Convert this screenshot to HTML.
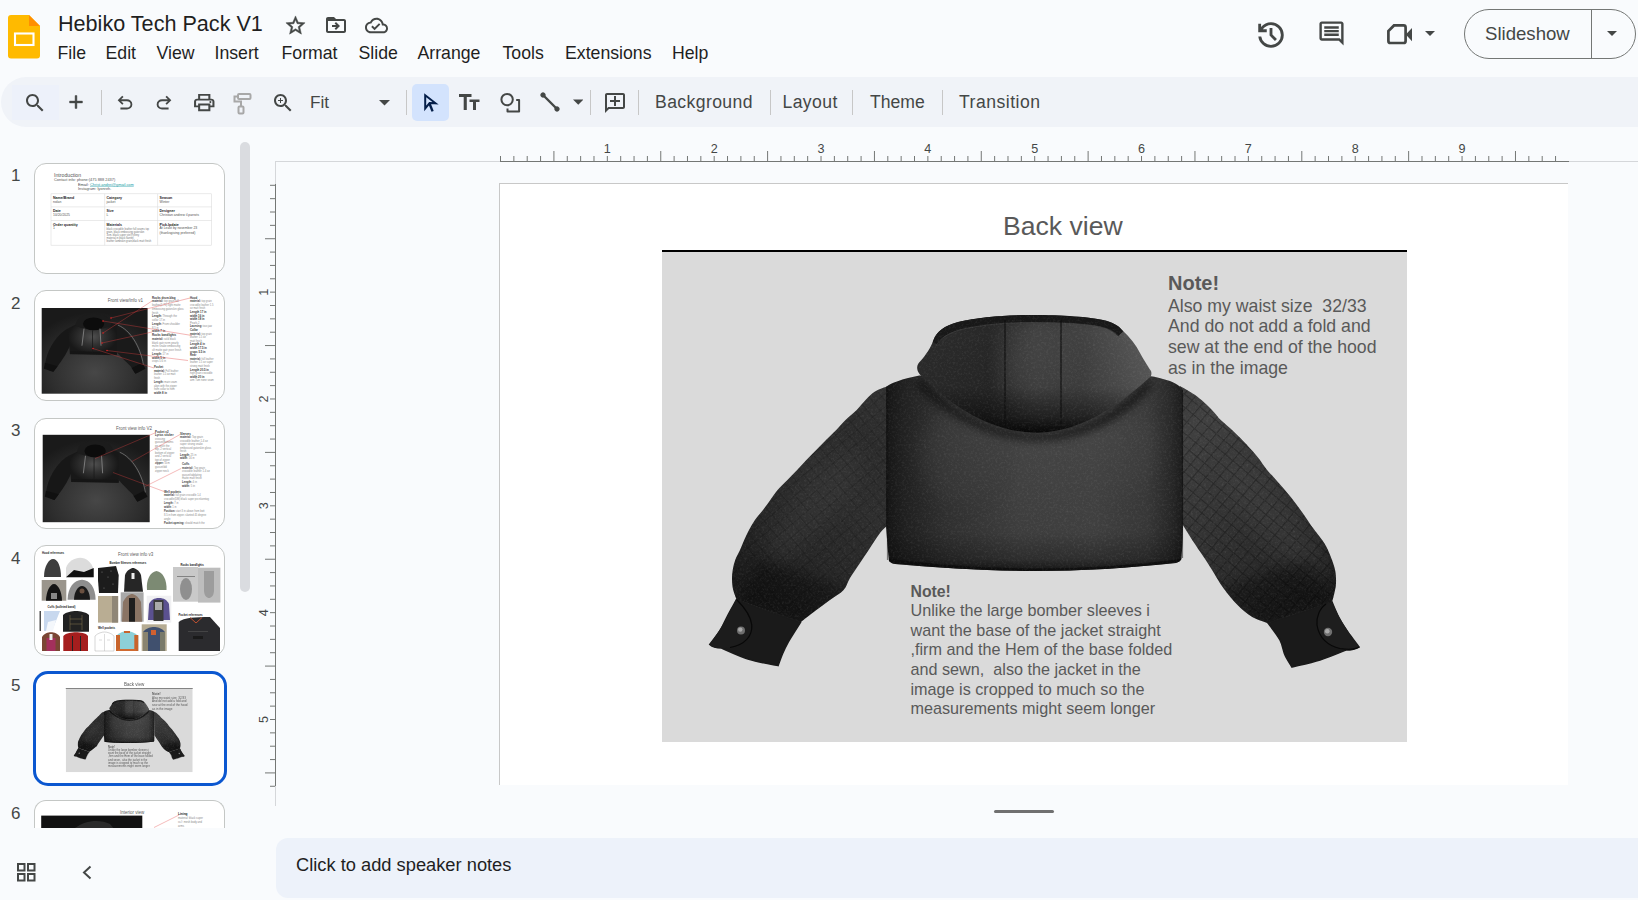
<!DOCTYPE html>
<html><head><meta charset="utf-8">
<style>
*{box-sizing:border-box;margin:0;padding:0}
html,body{width:1638px;height:900px;overflow:hidden;background:#f9fbfd;font-family:"Liberation Sans",sans-serif;color:#1f1f1f}
.a{position:absolute}
.ic{position:absolute;fill:#444746}
.menu span{position:absolute;top:43px;font-size:17.7px;color:#1f1f1f;white-space:nowrap;line-height:20px}
.tb{position:absolute;font-size:17.6px;color:#444746;white-space:nowrap;line-height:20px;top:92px}
.sep{position:absolute;width:1px;background:#c7c7c7;top:90px;height:25px}
.num{position:absolute;left:11px;font-size:17px;color:#444746;line-height:20px}
.th{position:absolute;left:34px;width:191px;height:111px;border:1px solid #c4c7c5;border-radius:12px;background:#fff;overflow:hidden}
</style></head>
<body>
<!-- HEADER -->
<svg class="a" style="left:8px;top:15px" width="32" height="44" viewBox="0 0 32 44">
 <path d="M3 0H21L32 11V40.5a3 3 0 0 1-3 3H3a3 3 0 0 1-3-3V3a3 3 0 0 1 3-3z" fill="#ffba00"/>
 <path d="M21 0L32 11H21z" fill="#ff8f00"/>
 <rect x="7" y="18.5" width="18.5" height="11.5" fill="none" stroke="#fff" stroke-width="2.1"/>
</svg>
<div class="a" style="left:58px;top:11px;font-size:21.6px;line-height:26px;color:#1f1f1f;white-space:nowrap">Hebiko Tech Pack V1</div>
<svg class="ic" style="left:284px;top:14px" width="23" height="23" viewBox="0 0 24 24"><path stroke="#444746" stroke-width="0.5" d="M22 9.24l-7.19-.62L12 2 9.19 8.63 2 9.24l5.46 4.73L5.82 21 12 17.27 18.18 21l-1.63-7.03L22 9.24zM12 15.4l-3.76 2.27 1-4.28-3.32-2.88 4.38-.38L12 6.1l1.71 4.04 4.38.38-3.32 2.88 1 4.28L12 15.4z"/></svg>
<svg class="ic" style="left:323.5px;top:12.8px" width="24" height="24" viewBox="0 0 24 24"><path d="M3 5h7.5l1.5 2v1H3z"/><path d="M20 6h-8l-2-2H4c-1.1 0-1.99.9-1.99 2L2 18c0 1.1.9 2 2 2h16c1.1 0 2-.9 2-2V8c0-1.1-.9-2-2-2zm0 12H4V6h5.17l2 2H20v10zm-7.84-6H8v2h4.16l-1.59 1.59L11.99 17 16 13.01 11.99 9l-1.41 1.41L12.16 12z"/></svg>
<svg class="ic" style="left:364.5px;top:14px" width="23" height="23" viewBox="0 0 24 24"><path d="M19.35 10.04C18.67 6.59 15.64 4 12 4 9.11 4 6.6 5.64 5.35 8.04 2.34 8.36 0 10.910 0 14c0 3.31 2.69 6 6 6h13c2.76 0 5-2.24 5-5 0-2.64-2.05-4.780-4.65-4.96zM19 18H6c-2.21 0-4-1.79-4-4 0-2.05 1.53-3.76 3.56-3.97l1.07-.11.5-.95C8.08 7.14 9.94 6 12 6c2.62 0 4.88 1.86 5.39 4.43l.3 1.5 1.53.11c1.56.1 2.78 1.41 2.78 2.960 0 1.65-1.35 3-3 3zm-9-3.82l-2.09-2.09L6.5 13.5 10 17l6.01-6.01-1.41-1.41z"/></svg>
<div class="menu">
 <span style="left:57.5px">File</span><span style="left:105.5px">Edit</span><span style="left:156.5px">View</span><span style="left:214.5px">Insert</span><span style="left:281.5px">Format</span><span style="left:358.5px">Slide</span><span style="left:417.5px">Arrange</span><span style="left:502.5px">Tools</span><span style="left:565px">Extensions</span><span style="left:672px">Help</span>
</div>
<!-- right header -->
<svg class="ic" style="left:1253.5px;top:17.5px" width="34" height="34" viewBox="0 -960 960 960"><path d="M480-120q-138 0-240.5-91.5T122-440h82q14 104 92.5 172T480-200q117 0 198.5-81.5T760-480q0-117-81.5-198.5T480-760q-69 0-129 32t-101 88h110v80H120v-240h80v94q51-64 124.5-99T480-840q75 0 140.5 28.5t114 77q48.5 48.5 77 114T840-480q0 75-28.5 140.5t-77 114q-48.5 48.5-114 77T480-120Zm112-192L440-464v-216h80v184l128 128-56 56Z"/></svg>
<svg class="ic" style="left:1316.5px;top:18.5px" width="29" height="29" viewBox="0 0 24 24"><path d="M21.99 4c0-1.1-.89-2-1.99-2H4c-1.1 0-2 .9-2 2v12c0 1.1.9 2 2 2h14l4 4-.01-18zM20 4v13.17L18.83 16H4V4h16zM6 12h12v2H6zm0-3h12v2H6zm0-3h12v2H6z"/></svg>
<svg class="a" style="left:1380px;top:15px" width="40" height="40" viewBox="1380 15 40 40"><path d="M1394 25.45H1403.6A2 2 0 0 1 1405.6 27.45V41A2 2 0 0 1 1403.6 43H1390.4A2 2 0 0 1 1388.4 41V31.1Z" fill="none" stroke="#444746" stroke-width="2.7" stroke-linejoin="miter"/><path d="M1405.8 34.6L1412 28V41.2Z" fill="#444746"/></svg>
<svg class="ic" style="left:1425px;top:30.5px" width="10" height="5" viewBox="0 0 10 5"><path d="M0 0h10L5 5z"/></svg>
<div class="a" style="left:1464px;top:9px;width:172px;height:50px;border:1px solid #747775;border-radius:25px"></div>
<div class="a" style="left:1591px;top:9px;width:1px;height:50px;background:#747775"></div>
<div class="a" style="left:1485px;top:23px;font-size:18.6px;line-height:22px;color:#444746">Slideshow</div>
<svg class="ic" style="left:1606.5px;top:30.5px" width="10" height="5" viewBox="0 0 10 5"><path d="M0 0h10L5 5z"/></svg>

<!-- TOOLBAR -->
<div class="a" style="left:1px;top:77px;width:1700px;height:50px;border-radius:25px;background:#f0f3f8"></div>
<div class="a" style="left:12px;top:85px;width:47px;height:35px;background:#edf1fa"></div>
<svg class="ic" style="left:23px;top:90.5px" width="24" height="24" viewBox="0 0 24 24"><path d="M15.5 14h-.79l-.28-.27C15.41 12.59 16 11.11 16 9.5 16 5.91 13.09 3 9.5 3S3 5.910 3 9.5 5.91 16 9.5 16c1.61 0 3.09-.59 4.23-1.57l.27.28v.79l5 4.99L20.49 19l-4.99-5zm-6 0C7.01 14 5 11.99 5 9.5S7.01 5 9.5 5 14 7.01 14 9.5 11.99 14 9.5 14z"/></svg>
<svg class="ic" style="left:64.5px;top:90.5px" width="22" height="22" viewBox="0 0 24 24"><path d="M19 13h-6v6h-2v-6H5v-2h6V5h2v6h6v2z" stroke="#444746" stroke-width="0.5"/></svg>
<div class="sep" style="left:101px"></div>
<svg class="ic" style="left:114px;top:92.3px" width="22" height="22" viewBox="0 -960 960 960"><path d="M280-200v-80h284q63 0 109.5-40T720-420q0-60-46.5-100T564-560H312l104 104-56 56-200-200 200-200 56 56-104 104h252q97 0 166.5 63T800-420q0 94-69.5 157T564-200H280Z"/></svg>
<svg class="ic" style="left:152.5px;top:92.3px" width="22" height="22" viewBox="0 -960 960 960"><path d="M396-200q-97 0-166.5-63T160-420q0-94 69.5-157T396-640h252L544-744l56-56 200 200-200 200-56-56 104-104H396q-63 0-109.5 40T240-420q0 60 46.5 100T396-280h284v80H396Z"/></svg>
<svg class="ic" style="left:192px;top:90.5px" width="24.5" height="23" viewBox="0 -960 960 960" preserveAspectRatio="none"><path d="M640-640v-120H320v120h-80v-200h480v200h-80Zm-480 80h640-640Zm560 100q17 0 28.5-11.5T760-500q0-17-11.5-28.5T720-540q-17 0-28.5 11.5T680-500q0 17 11.5 28.5T720-460Zm-80 260v-160H320v160h320Zm80 80H240v-160H80v-240q0-51 35-85.5t85-34.5h560q51 0 85.5 34.5T880-520v240H720v160Zm80-240v-160q0-17-11.5-28.5T760-560H200q-17 0-28.5 11.5T160-520v160h80v-80h480v80h80Z"/></svg>
<svg class="a" style="left:232px;top:92px" width="20" height="23" viewBox="0 0 20 23"><g fill="none" stroke="#a8a8a8" stroke-width="2"><rect x="6" y="2" width="12.5" height="5" rx="1"/><path d="M6 4.5H2.5v5h6.5v4.5"/><rect x="6.5" y="14.5" width="5" height="7" rx="1"/></g></svg>
<svg class="ic" style="left:271px;top:90.5px" width="24" height="24" viewBox="0 0 24 24"><path d="M15.5 14h-.79l-.28-.27C15.41 12.59 16 11.11 16 9.5 16 5.91 13.09 3 9.5 3S3 5.91 3 9.5 5.91 16 9.5 16c1.61 0 3.09-.59 4.23-1.57l.27.28v.79l5 4.99L20.49 19l-4.99-5zm-6 0C7.01 14 5 11.99 5 9.5S7.01 5 9.5 5 14 7.01 14 9.5 11.99 14 9.5 14zm2.5-4h-2v2H9v-2H7V9h2V7h1v2h2v1z"/></svg>
<div class="tb" style="left:310px;font-size:17.2px">Fit</div>
<svg class="ic" style="left:379px;top:100px" width="11" height="5.5" viewBox="0 0 10 5"><path d="M0 0h10L5 5z"/></svg>
<div class="sep" style="left:406px"></div>
<div class="a" style="left:412px;top:84px;width:37px;height:37px;border-radius:5px;background:#d3e3fd"></div>
<svg class="a" style="left:415px;top:85px" width="30" height="32" viewBox="415 85 30 32"><path d="M425.2 95.2L435.6 103.3L429.6 103.1L425.2 108.4Z" fill="none" stroke="#041e49" stroke-width="2" stroke-linejoin="miter"/><path d="M429.4 103.2L432.6 111.4" stroke="#041e49" stroke-width="2.4"/></svg>
<svg class="ic" style="left:459px;top:93.5px" width="21" height="16" viewBox="0 0 21 16"><path d="M0 0h12.5v3H7.8v13H4.7V3H0zM10.5 5.5h10v2.6h-3.5V16h-3V8.1h-3.5z"/></svg>
<svg class="a" style="left:495px;top:88px" width="30" height="30" viewBox="495 88 30 30"><g fill="none" stroke="#444746" stroke-width="2"><circle cx="507.1" cy="99.6" r="5.7"/><path d="M516.2 100.1H519.1V111.6H507.5V108.6" stroke-linejoin="round"/></g></svg>
<svg class="a" style="left:540px;top:92px" width="20" height="20" viewBox="0 0 20 20"><g stroke="#444746" fill="#444746"><path d="M3 3L17 17" stroke-width="2.4"/><circle cx="3" cy="3" r="2.2"/><circle cx="17" cy="17" r="2.2"/></g></svg>
<svg class="ic" style="left:572.5px;top:99px" width="10.5" height="6" viewBox="0 0 10 5"><path d="M0 0h10L5 5z"/></svg>
<div class="sep" style="left:590px"></div>
<svg class="ic" style="left:602.5px;top:90.5px" width="24" height="24" viewBox="0 0 24 24"><path d="M22 4c0-1.1-.9-2-2-2H4c-1.1 0-1.99.9-1.99 2L2 22l4-4h14c1.1 0 2-.9 2-2V4zm-2 12H5.17L4 17.17V4h16v12zM13 5h-2v4H7v2h4v4h2v-4h4V9h-4z"/></svg>
<div class="sep" style="left:638px"></div>
<div class="tb" style="left:655px;letter-spacing:0.4px">Background</div>
<div class="sep" style="left:770px"></div>
<div class="tb" style="left:782.5px;letter-spacing:0.4px">Layout</div>
<div class="sep" style="left:852px"></div>
<div class="tb" style="left:870px">Theme</div>
<div class="sep" style="left:942px"></div>
<div class="tb" style="left:959px;letter-spacing:0.5px">Transition</div>

<!-- SIDEBAR -->
<div class="num" style="top:166.3px">1</div>
<div class="num" style="top:293.8px">2</div>
<div class="num" style="top:421.3px">3</div>
<div class="num" style="top:548.8px">4</div>
<div class="num" style="top:676.3px">5</div>
<div class="num" style="top:803.8px">6</div>
<div class="th" style="top:162.5px;height:111px"><svg width="191" height="111" viewBox="34 162.5 191 111" style="position:absolute;left:-1px;top:-1px" font-family="Liberation Sans">
<text x="54.0" y="176.7" font-size="5.20" fill="#555">Introduction</text>
<text x="54.0" y="180.8" font-size="3.90" fill="#555">Contact info: phone:(475 888 2437)</text>
<text x="78.0" y="185.0" font-size="3.90" fill="#444">Email: </text>
<text x="90.0" y="185.0" font-size="3.90" fill="#1b9ba6" text-decoration="underline">Christ.andrei@gmail.com</text>
<text x="78.0" y="189.6" font-size="3.90" fill="#555">Instagram: lyonreh.</text>
<g stroke="#dcdcdc" stroke-width="0.6" fill="none"><rect x="51" y="193.3" width="160.6" height="51.4"/><path d="M51 206.4H211.6M51 220H211.6M104.7 193.3V244.7M157.6 193.3V244.7"/></g>
<text x="53.0" y="198.8" font-size="3.60" fill="#222" font-weight="bold">Name/Brand</text>
<text x="53.0" y="202.7" font-size="3.40" fill="#555">nolan</text>
<text x="106.5" y="198.8" font-size="3.60" fill="#222" font-weight="bold">Category</text>
<text x="106.5" y="202.7" font-size="3.40" fill="#555">jacket</text>
<text x="159.5" y="198.8" font-size="3.60" fill="#222" font-weight="bold">Season</text>
<text x="159.5" y="202.7" font-size="3.40" fill="#555">Winter</text>
<text x="53.0" y="211.9" font-size="3.60" fill="#222" font-weight="bold">Date</text>
<text x="53.0" y="215.8" font-size="3.40" fill="#555">10/20/2025</text>
<text x="106.5" y="211.9" font-size="3.60" fill="#222" font-weight="bold">Size</text>
<text x="106.5" y="215.8" font-size="3.40" fill="#555">L</text>
<text x="159.5" y="211.9" font-size="3.60" fill="#222" font-weight="bold">Designer</text>
<text x="159.5" y="215.8" font-size="3.40" fill="#555">Christian andrew il.parrots</text>
<text x="53.0" y="225.0" font-size="3.60" fill="#222" font-weight="bold">Order quantity</text>
<text x="53.0" y="228.9" font-size="3.40" fill="#555">1</text>
<text x="106.5" y="225.0" font-size="3.60" fill="#222" font-weight="bold">Materials</text>
<text x="159.5" y="225.0" font-size="3.60" fill="#222" font-weight="bold">Pick-Ipdate</text>
<text x="159.5" y="228.9" font-size="3.40" fill="#555">At Least by november 23</text>
<text x="106.5" y="229.0" font-size="2.60" fill="#777">black crocodile leather full seams top</text>
<text x="106.5" y="232.0" font-size="2.60" fill="#777">grain. black embossing gatorskin</text>
<text x="106.5" y="235.0" font-size="2.60" fill="#777">3cm. black super ste@shiny</text>
<text x="106.5" y="238.3" font-size="2.60" fill="#777">material in black flannel</text>
<text x="106.5" y="241.2" font-size="2.60" fill="#777">leather lambskin grain,black matt finish</text>
<text x="159.5" y="233.7" font-size="3.40" fill="#555">(thanksgiving preferred)</text>
</svg></div>
<div class="th" style="top:290.0px;height:111px"><svg width="191" height="111" viewBox="34 290.0 191 111" style="position:absolute;left:-1px;top:-1px" font-family="Liberation Sans">
<text x="107.8" y="302.0" font-size="4.50" fill="#5a5a5a">Front view/info v1</text>
<defs><radialGradient id="jg2" cx="0.5" cy="0.75" r="0.7"><stop offset="0" stop-color="#474747"/><stop offset="0.6" stop-color="#2e2e2e"/><stop offset="1" stop-color="#1a1a1a"/></radialGradient><radialGradient id="jg2j" cx="0.5" cy="0.45" r="0.5"><stop offset="0" stop-color="#505050"/><stop offset="0.5" stop-color="#303030"/><stop offset="1" stop-color="#181818"/></radialGradient></defs><rect x="41.7" y="308.0" width="105.9" height="85.7" fill="url(#jg2)"/><path d="M68.17 328.14 C57.59 333.71 49.11 346.56 45.94 359.42 C44.35 366.28 44.88 369.70 53.35 371.85 L57.59 366.28 C62.88 359.42 68.17 350.85 71.35 342.28 C71.35 336.28 70.29 331.14 68.17 328.14 Z" fill="#171717"/><path d="M44.88 362.85 L43.82 368.85 L53.35 371.85 L57.59 366.28 Z" fill="#101010"/><path d="M116.89 325.14 C126.42 329.43 137.01 342.28 142.31 359.42 C144.95 366.28 146.01 369.70 135.32 373.65 L130.66 366.28 C125.36 361.13 119.01 355.13 115.83 350.85 C114.77 336.28 114.77 330.28 116.89 325.14 Z" fill="#1a1a1a"/><path d="M142.31 362.85 L145.48 368.85 L135.32 373.65 L131.71 367.99 Z" fill="#101010"/><path d="M117.95 325.14 C130.66 330.28 140.19 346.56 143.36 364.56" fill="none" stroke="#9a9a9a" stroke-width="0.8" opacity="0.7"/><path d="M68.17 328.14 L79.82 322.57 L109.48 321.71 L116.89 325.14 L116.89 355.31 L69.87 354.28 Z" fill="url(#jg2j)"/><path d="M70.29 352.56 L116.89 353.42" stroke="#151515" stroke-width="2.4"/><path d="M75.59 325.14 C76.65 316.57 84.06 314.43 93.59 314.43 C103.12 314.43 110.53 316.57 111.59 324.28 C105.24 331.14 84.06 331.14 75.59 325.14 Z" fill="#1c1c1c"/><ellipse cx="93.59" cy="323.85" rx="10.59" ry="6.43" fill="#0c0c0c"/><path d="M84.06 328.57 L81.94 345.71 M99.94 328.57 L101.00 345.71" stroke="#aaa" stroke-width="0.6"/><path d="M92.53 330.28 L92.53 352.56" stroke="#1a1a1a" stroke-width="0.8"/>
<text x="152.0" y="298.5" font-size="2.90" fill="#3a3a3a" font-weight="bold">Rocks drum.blag</text><text x="152.0" y="302.2" font-size="2.70"><tspan font-weight="bold" fill="#3a3a3a">material:</tspan><tspan fill="#8a8a8a"> top grain full</tspan></text><text x="152.0" y="306.0" font-size="2.70" fill="#8a8a8a">leather(1.75) light matte</text><text x="152.0" y="309.8" font-size="2.70" fill="#8a8a8a">embossing gatorskin gloss</text><text x="152.0" y="313.5" font-size="2.70" fill="#8a8a8a">finish</text><text x="152.0" y="317.2" font-size="2.70"><tspan font-weight="bold" fill="#3a3a3a">Length:</tspan><tspan fill="#8a8a8a"> Through the</tspan></text><text x="152.0" y="321.0" font-size="2.70" fill="#8a8a8a">collar 17.in</text><text x="152.0" y="324.8" font-size="2.70"><tspan font-weight="bold" fill="#3a3a3a">Length:</tspan><tspan fill="#8a8a8a"> From shoulder</tspan></text><text x="152.0" y="328.5" font-size="2.70" fill="#8a8a8a">8.5 in</text><text x="152.0" y="332.2" font-size="2.90" fill="#3a3a3a" font-weight="bold">width 7 in</text><text x="152.0" y="336.0" font-size="2.90" fill="#3a3a3a" font-weight="bold">Rocks bandlights</text><text x="152.0" y="339.8" font-size="2.70"><tspan font-weight="bold" fill="#3a3a3a">material:</tspan><tspan fill="#8a8a8a"> sold black</tspan></text><text x="152.0" y="343.5" font-size="2.70" fill="#8a8a8a">blank gatr nvrm pearly</text><text x="152.0" y="347.2" font-size="2.70" fill="#8a8a8a">mchn snake embossing</text><text x="152.0" y="351.0" font-size="2.70" fill="#8a8a8a">ult matte gatr pvcn finish</text><text x="152.0" y="354.8" font-size="2.70"><tspan font-weight="bold" fill="#3a3a3a">Length:</tspan><tspan fill="#8a8a8a"> 17 in</tspan></text><text x="152.0" y="358.5" font-size="2.90" fill="#3a3a3a" font-weight="bold">width 5 in</text><text x="152.0" y="362.2" font-size="2.70" fill="#8a8a8a">crops 5.6 in</text>
<text x="190.0" y="298.5" font-size="2.80" fill="#3a3a3a" font-weight="bold">Hood</text><text x="190.0" y="302.1" font-size="2.60"><tspan font-weight="bold" fill="#3a3a3a">material:</tspan><tspan fill="#8a8a8a"> top grain</tspan></text><text x="190.0" y="305.7" font-size="2.60" fill="#8a8a8a">crocodile leather 1.5</text><text x="190.0" y="309.3" font-size="2.60" fill="#8a8a8a">oz matt finish</text><text x="190.0" y="312.9" font-size="2.80" fill="#3a3a3a" font-weight="bold">Length 17 in</text><text x="190.0" y="316.5" font-size="2.80" fill="#3a3a3a" font-weight="bold">width 16 in</text><text x="190.0" y="320.1" font-size="2.80" fill="#3a3a3a" font-weight="bold">width 18 in</text><text x="190.0" y="323.7" font-size="2.60" fill="#8a8a8a">Pearls 2</text><text x="190.0" y="327.3" font-size="2.60"><tspan font-weight="bold" fill="#3a3a3a">Lacesing:</tspan><tspan fill="#8a8a8a"> tour.jaw</tspan></text><text x="190.0" y="330.9" font-size="2.80" fill="#3a3a3a" font-weight="bold">Collar</text><text x="190.0" y="334.5" font-size="2.60"><tspan font-weight="bold" fill="#3a3a3a">material:</tspan><tspan fill="#8a8a8a"> top grain</tspan></text><text x="190.0" y="338.1" font-size="2.60" fill="#8a8a8a">leather 1.5 oz</text><text x="190.0" y="341.7" font-size="2.60" fill="#8a8a8a">matt finish</text><text x="190.0" y="345.3" font-size="2.80" fill="#3a3a3a" font-weight="bold">Length 4 in</text><text x="190.0" y="348.9" font-size="2.80" fill="#3a3a3a" font-weight="bold">width 17.5 in</text><text x="190.0" y="352.5" font-size="2.80" fill="#3a3a3a" font-weight="bold">crops 5.5 in</text><text x="190.0" y="356.1" font-size="2.80" fill="#3a3a3a" font-weight="bold">Rear</text><text x="190.0" y="359.7" font-size="2.60"><tspan font-weight="bold" fill="#3a3a3a">material:</tspan><tspan fill="#8a8a8a"> full leather</tspan></text><text x="190.0" y="363.3" font-size="2.60" fill="#8a8a8a">leather 1.5 oz super</text><text x="190.0" y="366.9" font-size="2.60" fill="#8a8a8a">strong matt finish</text><text x="190.0" y="370.5" font-size="2.80" fill="#3a3a3a" font-weight="bold">Length 20.5 in</text><text x="190.0" y="374.1" font-size="2.60" fill="#8a8a8a">high grain crocodile</text><text x="190.0" y="377.7" font-size="2.80" fill="#3a3a3a" font-weight="bold">width 20 in</text><text x="190.0" y="381.3" font-size="2.60" fill="#8a8a8a">arm Tum none seam</text>
<text x="154.0" y="368.0" font-size="2.80" fill="#3a3a3a" font-weight="bold">Pocket</text><text x="154.0" y="371.7" font-size="2.60"><tspan font-weight="bold" fill="#3a3a3a">material:</tspan><tspan fill="#8a8a8a"> Full leather</tspan></text><text x="154.0" y="375.4" font-size="2.60" fill="#8a8a8a">leather 1.5 oz matt</text><text x="154.0" y="379.1" font-size="2.60" fill="#8a8a8a">finish</text><text x="154.0" y="382.8" font-size="2.60"><tspan font-weight="bold" fill="#3a3a3a">Length:</tspan><tspan fill="#8a8a8a"> main seam</tspan></text><text x="154.0" y="386.5" font-size="2.60" fill="#8a8a8a">align with the zipper</text><text x="154.0" y="390.2" font-size="2.60" fill="#8a8a8a">from collar to hem</text><text x="154.0" y="393.9" font-size="2.80" fill="#3a3a3a" font-weight="bold">width 8 in</text>
<g stroke="#e04040" stroke-width="0.45" opacity="0.85" fill="none"><path d="M111 318L190 298M103 333L152 301M103 321L192 335.5M102 343L152 332M93 348.5L154 368M107 350.5L188 360.5"/></g><g fill="#e02020"><circle cx="111" cy="318" r="0.8"/><circle cx="103" cy="333" r="0.8"/><circle cx="103" cy="321" r="0.8"/><circle cx="102" cy="343" r="0.8"/><circle cx="93" cy="348.5" r="0.8"/><circle cx="107" cy="350.5" r="0.8"/></g>
</svg></div>
<div class="th" style="top:417.5px;height:111px"><svg width="191" height="111" viewBox="34 417.5 191 111" style="position:absolute;left:-1px;top:-1px" font-family="Liberation Sans">
<text x="116.0" y="429.3" font-size="4.50" fill="#5a5a5a">Front view info V2</text>
<defs><radialGradient id="jg3" cx="0.5" cy="0.75" r="0.7"><stop offset="0" stop-color="#474747"/><stop offset="0.6" stop-color="#2e2e2e"/><stop offset="1" stop-color="#1a1a1a"/></radialGradient><radialGradient id="jg3j" cx="0.5" cy="0.45" r="0.5"><stop offset="0" stop-color="#505050"/><stop offset="0.5" stop-color="#303030"/><stop offset="1" stop-color="#181818"/></radialGradient></defs><rect x="42.7" y="434.3" width="107.0" height="87.4" fill="url(#jg3)"/><path d="M69.45 454.84 C58.75 460.52 50.19 473.63 46.98 486.74 C45.38 493.73 45.91 497.23 54.47 499.41 L58.75 493.73 C64.10 486.74 69.45 478.00 72.66 469.26 C72.66 463.14 71.59 457.90 69.45 454.84 Z" fill="#171717"/><path d="M45.91 490.24 L44.84 496.35 L54.47 499.41 L58.75 493.73 Z" fill="#101010"/><path d="M118.67 451.78 C128.30 456.15 139.00 469.26 144.35 486.74 C147.02 493.73 148.09 497.23 137.29 501.25 L132.58 493.73 C127.23 488.49 120.81 482.37 117.60 478.00 C116.53 463.14 116.53 457.02 118.67 451.78 Z" fill="#1a1a1a"/><path d="M144.35 490.24 L147.56 496.35 L137.29 501.25 L133.65 495.48 Z" fill="#101010"/><path d="M119.74 451.78 C132.58 457.02 142.21 473.63 145.42 491.98" fill="none" stroke="#9a9a9a" stroke-width="0.8" opacity="0.7"/><path d="M69.45 454.84 L81.22 449.16 L111.18 448.28 L118.67 451.78 L118.67 482.54 L71.16 481.50 Z" fill="url(#jg3j)"/><path d="M71.59 479.75 L118.67 480.62" stroke="#151515" stroke-width="2.4"/><path d="M76.94 451.78 C78.01 443.04 85.50 440.86 95.13 440.86 C104.76 440.86 112.25 443.04 113.32 450.91 C106.90 457.90 85.50 457.90 76.94 451.78 Z" fill="#1c1c1c"/><ellipse cx="95.13" cy="450.47" rx="10.70" ry="6.56" fill="#0c0c0c"/><path d="M85.50 455.28 L83.36 472.76 M101.55 455.28 L102.62 472.76" stroke="#aaa" stroke-width="0.6"/><path d="M94.06 457.02 L94.06 479.75" stroke="#1a1a1a" stroke-width="0.8"/>
<text x="155.0" y="432.0" font-size="2.90" fill="#3a3a3a" font-weight="bold">Pocket v2</text><text x="155.0" y="435.6" font-size="2.90" fill="#3a3a3a" font-weight="bold">Lyrics sticker</text><text x="155.0" y="439.1" font-size="2.70" fill="#8a8a8a">crossing</text><text x="155.0" y="442.6" font-size="2.70" fill="#8a8a8a">gusset/bottoms</text><text x="155.0" y="446.2" font-size="2.70" fill="#8a8a8a">pp stitch the</text><text x="155.0" y="449.8" font-size="2.70" fill="#8a8a8a">top, 2 vertical</text><text x="155.0" y="453.3" font-size="2.70" fill="#8a8a8a">bottom of zipper</text><text x="155.0" y="456.9" font-size="2.70" fill="#8a8a8a">and 2 vertical</text><text x="155.0" y="460.4" font-size="2.70" fill="#8a8a8a">top of zipper</text><text x="155.0" y="463.9" font-size="2.70"><tspan font-weight="bold" fill="#3a3a3a">zipper:</tspan><tspan fill="#8a8a8a"> 5cm</tspan></text><text x="155.0" y="467.5" font-size="2.70" fill="#8a8a8a">gusset/dd</text><text x="155.0" y="471.1" font-size="2.70" fill="#8a8a8a">zipper neck</text>
<text x="180.0" y="434.0" font-size="2.90" fill="#3a3a3a" font-weight="bold">Sleeves</text><text x="180.0" y="437.5" font-size="2.70"><tspan font-weight="bold" fill="#3a3a3a">material:</tspan><tspan fill="#8a8a8a"> Top grain</tspan></text><text x="180.0" y="441.0" font-size="2.70" fill="#8a8a8a">crocodile leather 1.4 oz</text><text x="180.0" y="444.5" font-size="2.70" fill="#8a8a8a">super strong snake</text><text x="180.0" y="448.0" font-size="2.70" fill="#8a8a8a">embossed gatorskin gloss</text><text x="180.0" y="451.5" font-size="2.70" fill="#8a8a8a">finish</text><text x="180.0" y="455.0" font-size="2.70"><tspan font-weight="bold" fill="#3a3a3a">Length:</tspan><tspan fill="#8a8a8a"> 25 in</tspan></text><text x="180.0" y="458.5" font-size="2.70"><tspan font-weight="bold" fill="#3a3a3a">width:</tspan><tspan fill="#8a8a8a"> 16 in</tspan></text>
<text x="182.0" y="464.5" font-size="2.90" fill="#3a3a3a" font-weight="bold">Cuffs</text><text x="182.0" y="468.1" font-size="2.70"><tspan font-weight="bold" fill="#3a3a3a">material:</tspan><tspan fill="#8a8a8a"> Top grain</tspan></text><text x="182.0" y="471.7" font-size="2.70" fill="#8a8a8a">crocodile leather 1.4 oz</text><text x="182.0" y="475.3" font-size="2.70" fill="#8a8a8a">gusset/sdplating</text><text x="182.0" y="478.9" font-size="2.70" fill="#8a8a8a">matte matt finish</text><text x="182.0" y="482.5" font-size="2.70"><tspan font-weight="bold" fill="#3a3a3a">Length:</tspan><tspan fill="#8a8a8a"> 4 in</tspan></text><text x="182.0" y="486.1" font-size="2.70"><tspan font-weight="bold" fill="#3a3a3a">width:</tspan><tspan fill="#8a8a8a"> 5 in</tspan></text>
<text x="164.0" y="492.0" font-size="2.80" fill="#3a3a3a" font-weight="bold">Well pockets</text><text x="164.0" y="495.9" font-size="2.60"><tspan font-weight="bold" fill="#3a3a3a">material:</tspan><tspan fill="#8a8a8a"> full grain crocodile 1.4</tspan></text><text x="164.0" y="499.8" font-size="2.60" fill="#8a8a8a">crocodile(DM) black super pvcn/anntog</text><text x="164.0" y="503.7" font-size="2.60"><tspan font-weight="bold" fill="#3a3a3a">Length:</tspan><tspan fill="#8a8a8a"> 7 in</tspan></text><text x="164.0" y="507.6" font-size="2.60"><tspan font-weight="bold" fill="#3a3a3a">width:</tspan><tspan fill="#8a8a8a"> 1 in</tspan></text><text x="164.0" y="511.5" font-size="2.60"><tspan font-weight="bold" fill="#3a3a3a">Position:</tspan><tspan fill="#8a8a8a"> start 3 in above from bott</tspan></text><text x="164.0" y="515.4" font-size="2.60" fill="#8a8a8a">8.5 in from zipper. slanted 45 degree</text><text x="164.0" y="519.3" font-size="2.60" fill="#8a8a8a">angle</text><text x="164.0" y="523.2" font-size="2.60"><tspan font-weight="bold" fill="#3a3a3a">Pocket opening:</tspan><tspan fill="#8a8a8a"> should match the</tspan></text>
<g stroke="#e04040" stroke-width="0.45" opacity="0.8" fill="none"><path d="M95 458L156 432M132 461L180 434M113 472L164 491M145 486L181 468"/></g>
</svg></div>
<div class="th" style="top:545.0px;height:111px"><svg width="191" height="111" viewBox="34 545.0 191 111" style="position:absolute;left:-1px;top:-1px" font-family="Liberation Sans">
<text x="42.0" y="554.0" font-size="2.80" fill="#222" font-weight="bold">Hood references</text>
<text x="118.0" y="555.5" font-size="4.50" fill="#5a5a5a">Front view info v3</text>
<text x="109.5" y="563.5" font-size="2.80" fill="#222" font-weight="bold">Bomber Sleeves references</text>
<text x="180.5" y="566.0" font-size="2.80" fill="#222" font-weight="bold">Rocks bandlights</text>
<text x="47.5" y="607.6" font-size="2.80" fill="#222" font-weight="bold">Cuffs (bulleted band)</text>
<text x="98.0" y="628.5" font-size="2.80" fill="#222" font-weight="bold">Well pockets</text>
<text x="178.5" y="615.5" font-size="2.80" fill="#222" font-weight="bold">Pocket references</text>
<rect x="173.0" y="567.0" width="25.0" height="34.7" fill="#c9c9c9"/>
<rect x="198.0" y="567.7" width="22.4" height="34.9" fill="#bdbdbd"/>
<rect x="141.7" y="624.3" width="25.0" height="26.7" fill="#b5ab92"/>
<rect x="120.7" y="592.3" width="22.9" height="29.4" fill="#a9a9a9"/>
<rect x="146.7" y="595.7" width="24.6" height="26.9" fill="#f0f0f2"/>
<rect x="98.0" y="596.0" width="20.3" height="26.6" fill="#b9ad93"/>
<path d="M44 577C44 566 49 559 53 559C58 559 61 567 61 577Z" fill="#3e3e3e"/>
<path d="M66 568C68 561 75 557.7 80 557.7C86 557.7 92 562 93.7 570L93.7 577.3H66Z" fill="#dcdcdc"/><path d="M66 577.3L74 570L84 572L93.7 568V577.3Z" fill="#111"/>
<rect x="41.7" y="580" width="24.6" height="20.7" fill="#9a958c"/><path d="M46 600.7C46 592 50 584 54 584C58 584 62 592 62 600.7Z" fill="#151515"/><rect x="51" y="593" width="6" height="6" fill="#888"/>
<path d="M67.6 599.7C67.6 588 74 579.7 82 579.7C90 579.7 95.6 588 95.6 599.7Z" fill="#8e8e8e"/><path d="M74 599.7C74 592 78 586 82 586C86 586 90 592 90 599.7Z" fill="#1a1a1a"/><circle cx="82" cy="591" r="2.5" fill="#6a5040"/>
<path d="M98 568L116 566L118.7 575L118 593H99L98 580Z" fill="#1c1c1c"/><g fill="#777"><circle cx="102" cy="572" r="0.6"/><circle cx="108" cy="577" r="0.6"/><circle cx="113" cy="584" r="0.6"/><circle cx="104" cy="588" r="0.6"/><circle cx="111" cy="571" r="0.6"/></g>
<path d="M124 591.7L125 575C127 570 131 568 133 568C135 568 139 570 141 575L143 591.7Z" fill="#262626"/><rect x="131.5" y="573" width="3" height="6" fill="#eee"/>
<path d="M147 590C146 580 150 572 156.5 571C163 572 167 580 166.5 590Z" fill="#7c8a73"/>
<rect x="112" y="596" width="6" height="26.6" fill="#8f8676"/>
<path d="M122 621.7L123 602C126 596 130 594 132 594C134 594 138 596 141 602L142 621.7Z" fill="#8a7464"/><rect x="129" y="598" width="6" height="23.7" fill="#1e1e1e"/>
<path d="M148 620L149 604C151 600 154 598 159 598C164 598 167 600 169 604L170 620Z" fill="#5b5190"/><rect x="153.5" y="600" width="10" height="21" fill="#3a3a3a"/><rect x="155" y="602" width="7" height="8" fill="#aaa"/>
<ellipse cx="186" cy="589" rx="6" ry="11" fill="#8f8f8f"/><rect x="177" y="576" width="18" height="0.6" fill="#555"/><path d="M204 571H214V590C214 596 211 598 209 598C207 598 204 596 204 590Z" fill="#9c9c9c"/>
<path d="M178.7 651V622C184 617.5 195 617 210 617L220 628V651Z" fill="#2b2b2e"/><rect x="188" y="631" width="20" height="0.6" fill="#555"/><rect x="193" y="636" width="10" height="3" fill="#1a1a1a"/><path d="M190 617.5L196 623L202 617.5" fill="none" stroke="#c05030" stroke-width="1"/>
<path d="M44 611L60 611L52 631H44Z" fill="#c8d8ee"/><path d="M48 622L56 620L53 631H46Z" fill="#f4f7fb"/><rect x="39.6" y="611" width="1.2" height="20" fill="#222"/>
<path d="M63 631.7V615C66 612 72 611 76 611C80 611 86 612 89 615V631.7Z" fill="#222"/><g stroke="#8a7a50" stroke-width="0.5"><path d="M70 615v15M82 615v15M70 619h12M70 624h12"/></g>
<path d="M42 651V637C44 633.5 48 632.3 51 632.3C54 632.3 58 633.5 60 637V651Z" fill="#7a4634"/><rect x="46.5" y="638" width="9" height="13" fill="#a3305c"/><rect x="49.5" y="634" width="3" height="6" fill="#eee"/>
<path d="M63.3 651V636C66 633 72 632.3 76 632.3C80 632.3 86 633 88 636V651Z" fill="#a51e1e"/><g fill="#222"><rect x="72" y="636" width="1" height="15"/><rect x="80" y="636" width="1" height="15"/></g>
<path d="M95 651V636C98 633 102 632 104.5 632C107 632 111 633 114 636V651Z" fill="#fff" stroke="#999" stroke-width="0.4"/><path d="M104.5 634V651M99 640h3M107 640h3" stroke="#aaa" stroke-width="0.4"/>
<path d="M116 651V636C119 632.5 124 631 127 631C130 631 135 632.5 138.3 636V651Z" fill="#8dd0d8"/><rect x="116" y="635" width="4" height="16" fill="#c8642c"/><rect x="134.3" y="635" width="4" height="16" fill="#c8642c"/><rect x="124" y="631" width="6" height="2" fill="#c8642c"/><rect x="118" y="649" width="18" height="2" fill="#d06a30"/>
<path d="M143 651V632C146 628 151 627 154 627C157 627 162 628 165 632V651Z" fill="#40506e"/><rect x="151" y="630" width="5" height="5" fill="#d06030"/><rect x="143" y="632" width="5" height="19" fill="#8a8470"/><rect x="160" y="632" width="5" height="19" fill="#7a7a6a"/>
</svg></div>
<div class="th" style="top:800.0px;height:40px;border-bottom:none;border-bottom-left-radius:0;border-bottom-right-radius:0"><svg width="191" height="40" viewBox="34 800.0 191 40" style="position:absolute;left:-1px;top:-1px" font-family="Liberation Sans">
<rect x="41.2" y="815.6" width="101.1" height="20" fill="#121212"/>
<path d="M75 828C85 820 100 819 110 824L115 830L70 830Z" fill="#2a2a2a"/>
<text x="120.0" y="814.2" font-size="4.50" fill="#5a5a5a">Interior view</text>
<text x="178.0" y="815.0" font-size="3.20" fill="#222" font-weight="bold">Lining</text>
<text x="178.0" y="819.0" font-size="2.70" fill="#888">material: black super</text>
<text x="178.0" y="822.8" font-size="2.70" fill="#888">ss#: mesh body and</text>
<text x="178.0" y="826.6" font-size="2.70" fill="#888">arms</text>
<path d="M154 827.5L179 815" stroke="#e04040" stroke-width="0.45" opacity="0.8"/>
</svg></div>
<div class="a" style="left:0;top:828px;width:240px;height:72px;background:#f9fbfd"></div>
<div class="a" style="left:240px;top:142px;width:10px;height:450px;border-radius:5px;background:#dadce0"></div>
<svg class="a" style="left:16px;top:861.5px" width="21" height="21" viewBox="0 0 21 21"><g fill="none" stroke="#444746" stroke-width="2"><rect x="2" y="2" width="6.5" height="6.5"/><rect x="12" y="2" width="6.5" height="6.5"/><rect x="2" y="12" width="6.5" height="6.5"/><rect x="12" y="12" width="6.5" height="6.5"/></g></svg>
<svg class="a" style="left:81px;top:865px" width="12" height="15" viewBox="0 0 12 15"><path d="M9.5 1.5L3 7.5l6.5 6" fill="none" stroke="#444746" stroke-width="2"/></svg>
<div class="a" style="left:32.5px;top:670.5px;width:194.5px;height:115.5px;border:3.2px solid #0b57d0;border-radius:15px;background:#fff;overflow:hidden"></div>
<div class="a" style="left:38.2px;top:677px;width:1070px;height:602px;transform:scale(0.1704);transform-origin:0 0">
<div class="a" style="left:-499px;top:-183px;width:1638px;height:900px">
<!-- SLIDE CONTENT -->
<div class="a" style="left:1003px;top:210px;font-size:26.6px;line-height:32px;color:#595959;white-space:nowrap">Back view</div>
<div class="a" style="left:662px;top:250px;width:745px;height:2.5px;background:#000"></div>
<svg class="a" style="left:662px;top:252px" width="745" height="490" viewBox="662 252 745 490">
 <defs>
  <filter id="t5blur4" x="-20%" y="-20%" width="140%" height="140%"><feGaussianBlur stdDeviation="4"/></filter>
  <filter id="t5blur10" x="-50%" y="-50%" width="200%" height="200%"><feGaussianBlur stdDeviation="10"/></filter>
  <filter id="t5blur6" x="-50%" y="-50%" width="200%" height="200%"><feGaussianBlur stdDeviation="6"/></filter>
  <linearGradient id="t5bodyH" x1="886" y1="0" x2="1183" y2="0" gradientUnits="userSpaceOnUse">
   <stop offset="0" stop-color="#161616"/><stop offset="0.06" stop-color="#222"/><stop offset="0.2" stop-color="#343434"/><stop offset="0.45" stop-color="#444"/><stop offset="0.7" stop-color="#464646"/><stop offset="0.88" stop-color="#3c3c3c"/><stop offset="0.96" stop-color="#2a2a2a"/><stop offset="1" stop-color="#1c1c1c"/>
  </linearGradient>
  <linearGradient id="t5bodyV" x1="0" y1="376" x2="0" y2="571" gradientUnits="userSpaceOnUse">
   <stop offset="0" stop-color="#000" stop-opacity="0.05"/><stop offset="0.3" stop-color="#000" stop-opacity="0"/><stop offset="0.8" stop-color="#000" stop-opacity="0.1"/><stop offset="0.94" stop-color="#000" stop-opacity="0.35"/><stop offset="1" stop-color="#000" stop-opacity="0.7"/>
  </linearGradient>
  <linearGradient id="t5hoodH" x1="918" y1="0" x2="1151" y2="0" gradientUnits="userSpaceOnUse">
   <stop offset="0" stop-color="#2c2c2c"/><stop offset="0.3" stop-color="#282828"/><stop offset="0.5" stop-color="#404040"/><stop offset="0.72" stop-color="#424242"/><stop offset="0.9" stop-color="#525252"/><stop offset="1" stop-color="#5a5a5a"/>
  </linearGradient>
  <linearGradient id="t5hoodV" x1="0" y1="314" x2="0" y2="435" gradientUnits="userSpaceOnUse">
   <stop offset="0" stop-color="#000" stop-opacity="0.1"/><stop offset="0.15" stop-color="#000" stop-opacity="0"/><stop offset="0.6" stop-color="#000" stop-opacity="0.08"/><stop offset="0.85" stop-color="#000" stop-opacity="0.5"/><stop offset="1" stop-color="#000" stop-opacity="0.95"/>
  </linearGradient>
  <linearGradient id="t5slvL" x1="735" y1="600" x2="880" y2="400" gradientUnits="userSpaceOnUse">
   <stop offset="0" stop-color="#161616"/><stop offset="0.3" stop-color="#262626"/><stop offset="0.6" stop-color="#2e2e2e"/><stop offset="0.85" stop-color="#2c2c2c"/><stop offset="1" stop-color="#303030"/>
  </linearGradient>
  <linearGradient id="t5slvR" x1="1335" y1="600" x2="1185" y2="400" gradientUnits="userSpaceOnUse">
   <stop offset="0" stop-color="#181818"/><stop offset="0.3" stop-color="#2a2a2a"/><stop offset="0.6" stop-color="#363636"/><stop offset="0.9" stop-color="#404040"/><stop offset="1" stop-color="#3c3c3c"/>
  </linearGradient>
  <linearGradient id="t5slvIn" x1="0" y1="0" x2="1" y2="0">
   <stop offset="0" stop-color="#000" stop-opacity="0"/><stop offset="1" stop-color="#000" stop-opacity="0.5"/>
  </linearGradient>
  <pattern id="t5quiltR" width="10" height="10" patternUnits="userSpaceOnUse" patternTransform="rotate(40)">
   <path d="M0 0.5H10M0.5 0V10" stroke="#000" stroke-opacity="0.28" stroke-width="1.2"/>
  </pattern>
  <pattern id="t5quiltL" width="10" height="10" patternUnits="userSpaceOnUse" patternTransform="rotate(-40)">
   <path d="M0 0.5H10M0.5 0V10" stroke="#000" stroke-opacity="0.15" stroke-width="1"/>
  </pattern>
  <clipPath id="t5bodyClip"><path d="M919.4 375.6C912 377 904 379 897 381.5C893 382.8 889 384.5 886 387L886 526C887 540 888 552 889 561C891 563 893 564 895 564C940 568 990 571 1035 571C1080 571 1130 568 1176 563C1178.5 562 1180.5 561 1181.4 559C1182.5 545 1183 535 1183 524L1183 390C1182 388 1178 384 1170 381C1163 379 1156 377 1149 376.1Z"/></clipPath>
  <clipPath id="t5hoodClip"><path d="M919.7 374.3C915.5 369 917 364 920.5 361C926 355 931 347 933.5 340C937 331 944 326 958 322C980 317 1005 315 1032 315C1062 315 1090 317 1103 320C1112 322 1118 325 1122 330C1130 337 1136 345 1140 353C1145 362 1149 368 1151 371C1152 374 1151 376 1150 377C1125 400 1085 432 1037.8 432.7C995 433 955 410 919.7 374.3Z"/></clipPath>
  <clipPath id="t5slvLClip"><path d="M888.0 386.0C885.8 386.9 878.7 389.2 875.0 391.5C871.3 393.8 869.0 396.5 866.0 399.6C863.0 402.7 860.1 406.6 856.7 410.0C853.3 413.4 848.9 416.7 845.5 420.0C842.1 423.3 839.5 426.7 836.2 430.0C833.0 433.3 829.3 436.7 826.0 440.0C822.7 443.3 819.5 446.7 816.2 450.0C812.9 453.3 809.6 456.7 806.4 460.0C803.2 463.3 800.3 466.7 797.1 470.0C793.9 473.3 790.6 476.7 787.4 480.0C784.1 483.3 780.5 486.7 777.6 490.0C774.8 493.3 772.7 496.7 770.3 500.0C767.9 503.3 765.6 506.7 763.0 510.0C760.4 513.3 757.2 516.7 754.9 520.0C752.6 523.3 750.8 526.7 749.0 530.0C747.2 533.3 745.7 536.7 744.2 540.0C742.7 543.3 741.5 546.7 740.0 550.0C738.5 553.3 736.4 556.7 735.2 560.0C734.0 563.3 733.2 566.7 732.7 570.0C732.2 573.3 731.9 576.7 732.0 580.0C732.1 583.3 732.4 586.8 733.2 590.0C734.0 593.2 736.0 597.9 736.6 599.5L800.6 622.2C803.0 620.3 810.1 614.7 815.0 611.0C819.9 607.3 825.1 603.5 829.9 600.0C834.7 596.5 840.2 593.7 843.6 590.0C847.0 586.3 847.3 582.5 850.0 578.0C852.7 573.5 856.7 568.0 860.0 563.0C863.3 558.0 866.7 553.0 870.0 548.0C873.3 543.0 877.2 536.7 880.0 533.0C882.8 529.3 885.8 527.2 887.0 526.0L889 386Z"/></clipPath>
  <clipPath id="t5slvRClip"><path d="M1180.0 386.0C1182.4 387.4 1190.4 391.9 1194.4 394.6C1198.4 397.4 1200.9 399.6 1204.2 402.5C1207.5 405.4 1211.2 409.3 1214.0 412.2C1216.8 415.1 1217.5 416.8 1220.8 420.0C1224.1 423.2 1229.6 427.6 1233.9 431.7C1238.2 435.8 1242.5 440.0 1246.6 444.4C1250.7 448.8 1255.0 453.7 1258.4 458.0C1261.8 462.3 1263.4 465.6 1267.1 470.0C1270.8 474.4 1276.3 480.1 1280.3 484.7C1284.3 489.3 1287.6 493.2 1291.3 497.8C1295.0 502.4 1298.6 507.4 1302.3 512.5C1306.0 517.6 1309.6 523.5 1313.3 528.6C1317.0 533.7 1321.5 538.6 1324.4 543.3C1327.3 548.0 1328.9 552.2 1330.7 556.7C1332.5 561.2 1334.2 565.6 1335.1 570.0C1336.0 574.4 1336.2 579.3 1336.0 583.3C1335.8 587.3 1334.9 590.9 1334.2 594.0C1333.5 597.1 1332.4 600.7 1332.0 602.0L1268 623C1265.4 622.0 1257.2 619.9 1252.2 616.9C1247.2 613.9 1242.6 610.1 1237.8 605.3C1233.0 600.5 1228.1 594.7 1223.3 588.0C1218.5 581.3 1213.7 572.4 1208.9 564.9C1204.1 557.4 1198.8 550.0 1194.4 543.2C1190.0 536.5 1184.5 527.5 1182.5 524.4L1180 386Z"/></clipPath>
  <filter id="t5leather" x="662" y="252" width="745" height="490" filterUnits="userSpaceOnUse">
   <feTurbulence type="fractalNoise" baseFrequency="0.45" numOctaves="3" seed="7"/>
   <feColorMatrix type="matrix" values="0 0 0 0 1  0 0 0 0 1  0 0 0 0 1  1.6 0 0 0 -0.72"/>
  </filter>
  <clipPath id="t5jkClip"><path d="M888.0 386.0C885.8 386.9 878.7 389.2 875.0 391.5C871.3 393.8 869.0 396.5 866.0 399.6C863.0 402.7 860.1 406.6 856.7 410.0C853.3 413.4 848.9 416.7 845.5 420.0C842.1 423.3 839.5 426.7 836.2 430.0C833.0 433.3 829.3 436.7 826.0 440.0C822.7 443.3 819.5 446.7 816.2 450.0C812.9 453.3 809.6 456.7 806.4 460.0C803.2 463.3 800.3 466.7 797.1 470.0C793.9 473.3 790.6 476.7 787.4 480.0C784.1 483.3 780.5 486.7 777.6 490.0C774.8 493.3 772.7 496.7 770.3 500.0C767.9 503.3 765.6 506.7 763.0 510.0C760.4 513.3 757.2 516.7 754.9 520.0C752.6 523.3 750.8 526.7 749.0 530.0C747.2 533.3 745.7 536.7 744.2 540.0C742.7 543.3 741.5 546.7 740.0 550.0C738.5 553.3 736.4 556.7 735.2 560.0C734.0 563.3 733.2 566.7 732.7 570.0C732.2 573.3 731.9 576.7 732.0 580.0C732.1 583.3 732.4 586.8 733.2 590.0C734.0 593.2 736.0 597.9 736.6 599.5L800.6 622.2C803.0 620.3 810.1 614.7 815.0 611.0C819.9 607.3 825.1 603.5 829.9 600.0C834.7 596.5 840.2 593.7 843.6 590.0C847.0 586.3 847.3 582.5 850.0 578.0C852.7 573.5 856.7 568.0 860.0 563.0C863.3 558.0 866.7 553.0 870.0 548.0C873.3 543.0 877.2 536.7 880.0 533.0C882.8 529.3 885.8 527.2 887.0 526.0L889 386Z"/><path d="M1180.0 386.0C1182.4 387.4 1190.4 391.9 1194.4 394.6C1198.4 397.4 1200.9 399.6 1204.2 402.5C1207.5 405.4 1211.2 409.3 1214.0 412.2C1216.8 415.1 1217.5 416.8 1220.8 420.0C1224.1 423.2 1229.6 427.6 1233.9 431.7C1238.2 435.8 1242.5 440.0 1246.6 444.4C1250.7 448.8 1255.0 453.7 1258.4 458.0C1261.8 462.3 1263.4 465.6 1267.1 470.0C1270.8 474.4 1276.3 480.1 1280.3 484.7C1284.3 489.3 1287.6 493.2 1291.3 497.8C1295.0 502.4 1298.6 507.4 1302.3 512.5C1306.0 517.6 1309.6 523.5 1313.3 528.6C1317.0 533.7 1321.5 538.6 1324.4 543.3C1327.3 548.0 1328.9 552.2 1330.7 556.7C1332.5 561.2 1334.2 565.6 1335.1 570.0C1336.0 574.4 1336.2 579.3 1336.0 583.3C1335.8 587.3 1334.9 590.9 1334.2 594.0C1333.5 597.1 1332.4 600.7 1332.0 602.0L1268 623C1265.4 622.0 1257.2 619.9 1252.2 616.9C1247.2 613.9 1242.6 610.1 1237.8 605.3C1233.0 600.5 1228.1 594.7 1223.3 588.0C1218.5 581.3 1213.7 572.4 1208.9 564.9C1204.1 557.4 1198.8 550.0 1194.4 543.2C1190.0 536.5 1184.5 527.5 1182.5 524.4L1180 386Z"/><path d="M919.4 375.6C912 377 904 379 897 381.5C893 382.8 889 384.5 886 387L886 526C887 540 888 552 889 561C891 563 893 564 895 564C940 568 990 571 1035 571C1080 571 1130 568 1176 563C1178.5 562 1180.5 561 1181.4 559C1182.5 545 1183 535 1183 524L1183 390C1182 388 1178 384 1170 381C1163 379 1156 377 1149 376.1Z"/><path d="M919.7 374.3C915.5 369 917 364 920.5 361C926 355 931 347 933.5 340C937 331 944 326 958 322C980 317 1005 315 1032 315C1062 315 1090 317 1103 320C1112 322 1118 325 1122 330C1130 337 1136 345 1140 353C1145 362 1149 368 1151 371C1152 374 1151 376 1150 377C1125 400 1085 432 1037.8 432.7C995 433 955 410 919.7 374.3Z"/></clipPath>
 </defs>
 <rect x="662" y="252" width="745" height="490" fill="#dadada"/>
 <!-- left sleeve -->
 <g clip-path="url(#t5slvLClip)">
  <rect x="720" y="380" width="175" height="250" fill="url(#t5slvL)"/>
  <ellipse cx="815" cy="505" rx="20" ry="70" transform="rotate(40 815 505)" fill="#3a3a3a" opacity="0.45" filter="url(#t5blur10)"/>
  <rect x="720" y="380" width="175" height="250" fill="url(#t5quiltL)"/>
  <path d="M740 600C770 610 790 620 805 625L850 590L760 560Z" fill="#000" opacity="0.3" filter="url(#t5blur6)"/>
 </g>
 <!-- left cuff -->
 <path d="M736.6 599.5C735.2 602.1 730.7 609.9 728.0 615.0C725.3 620.1 723.5 625.1 720.5 630.0C717.5 634.9 711.6 642.1 709.8 644.5C713 647.5 717 648 721.5 648C726.0 649.9 739.4 656.3 748.8 659.2C758.2 662.1 773.2 664.5 778.1 665.5C778.8 663.8 780.4 658.8 782.0 655.0C783.6 651.2 784.8 648.1 787.9 642.6C791.0 637.1 798.5 625.6 800.6 622.2C780 615 755 607 736.6 599.5Z" fill="#1a1a1a" stroke="#1a1a1a" stroke-width="1.6"/>
 <path d="M736.6 599.5C745 608 751 617 751.8 625C752.5 636 745 645 730 647.5C725 648 721.5 648 721.5 648C717 648 713 647.5 709.8 644.5C715 636 720.5 630 728 615Z" fill="#1c1c1c"/>
 <path d="M736.6 599.5C745 608 751 617 751.8 625C752.5 636 745 645 730 647.5" fill="none" stroke="#080808" stroke-width="1.2"/>
 <circle cx="741" cy="630.4" r="4" fill="#6e6e6e"/><circle cx="740.3" cy="629.6" r="2.2" fill="#a8a8a8"/>
 <!-- right sleeve -->
 <g clip-path="url(#t5slvRClip)">
  <rect x="1175" y="380" width="170" height="250" fill="url(#t5slvR)"/>
  <ellipse cx="1275" cy="520" rx="22" ry="75" transform="rotate(-40 1275 520)" fill="#444" opacity="0.4" filter="url(#t5blur10)"/>
  <rect x="1175" y="380" width="170" height="250" fill="url(#t5quiltR)"/>
  <path d="M1330 600C1300 612 1280 620 1265 625L1215 590L1310 560Z" fill="#000" opacity="0.3" filter="url(#t5blur6)"/>
 </g>
 <!-- right cuff -->
 <path d="M1332 602C1333.3 605.0 1337.0 614.5 1340.0 620.0C1343.0 625.5 1346.8 630.5 1350.0 635.0C1353.2 639.5 1357.5 645.0 1359.0 647.0C1355 649.5 1350 650 1346 650C1341.7 651.7 1329.0 657.2 1320.0 660.0C1311.0 662.8 1296.7 665.8 1292.0 667.0C1290.8 665.0 1287.0 659.5 1285.0 655.0C1283.0 650.5 1282.8 645.3 1280.0 640.0C1277.2 634.7 1270.0 625.8 1268.0 623.0C1290 616 1312 609 1332 602Z" fill="#1a1a1a" stroke="#1a1a1a" stroke-width="1.6"/>
 <path d="M1332 602C1340 620 1350 635 1359 647C1355 649.5 1350 650 1340 648.5C1328 646 1319 638 1317 625C1316 617 1320 608 1326 604Z" fill="#1e1e1e"/>
 <path d="M1359 647C1355 649.5 1350 650 1340 648.5C1328 646 1319 638 1317 625C1316 617 1320 608 1326 604" fill="none" stroke="#080808" stroke-width="1.2"/>
 <circle cx="1328" cy="632" r="4.2" fill="#707070"/><circle cx="1327.3" cy="631.2" r="2.3" fill="#aaa"/>
 <!-- body -->
 <g clip-path="url(#t5bodyClip)">
  <rect x="880" y="370" width="310" height="210" fill="url(#t5bodyH)"/>
  <ellipse cx="960" cy="455" rx="40" ry="45" fill="#444" opacity="0.35" filter="url(#t5blur10)"/>
  <ellipse cx="1115" cy="450" rx="40" ry="45" fill="#444" opacity="0.35" filter="url(#t5blur10)"/>
  <rect x="880" y="370" width="310" height="210" fill="url(#t5bodyV)"/>
  <path d="M919 377C950 410 990 432 1037 433C1085 432 1125 405 1151 376L1151 388C1120 422 1085 440 1037 441C990 440 950 418 919 388Z" fill="#000" opacity="0.6" filter="url(#t5blur4)"/>
  <path d="M885 560C930 566 985 570 1035 570C1085 570 1140 566 1185 560" fill="none" stroke="#0a0a0a" stroke-width="3" opacity="0.7"/>
 </g>
 <path d="M887.5 390V560M1182.5 390V558" stroke="#101010" stroke-width="1.2" opacity="0.5"/>
 <!-- hood -->
 <g clip-path="url(#t5hoodClip)">
  <rect x="910" y="310" width="250" height="130" fill="url(#t5hoodH)"/>
  <ellipse cx="1035" cy="365" rx="30" ry="35" fill="#4a4a4a" opacity="0.5" filter="url(#t5blur10)"/>
  <rect x="910" y="310" width="250" height="130" fill="url(#t5hoodV)"/>
  <path d="M934 343C938 334 946 329.5 959 325.5C981 320.5 1006 318.5 1032 318.5C1062 318.5 1089 320 1102 323C1110 325 1116 328 1121 333.5" fill="none" stroke="#181818" stroke-width="8"/>
  <path d="M936 346C940 338 948 333.5 961 329.5C983 324.5 1007 322.5 1032 322.5C1062 322.5 1089 324 1101 327C1109 329 1115 332 1120 337.5" fill="none" stroke="#444" stroke-width="0.9" opacity="0.7"/>
 </g>
 <path d="M1005 319V428M1061 319V427" stroke="#0e0e0e" stroke-width="1.3" opacity="0.85"/>
 <g clip-path="url(#t5jkClip)" opacity="0.1"><rect x="662" y="252" width="745" height="490" fill="#fff" filter="url(#t5leather)"/></g>
</svg>
<div class="a" style="left:1168px;top:270.5px;color:#595959;white-space:nowrap">
 <div style="font-size:20px;font-weight:bold;line-height:25px">Note!</div>
 <div style="font-size:17.7px;line-height:20.9px">Also my waist size&nbsp; 32/33<br>And do not add a fold and<br>sew at the end of the hood<br>as in the image</div>
</div>
<div class="a" style="left:910.5px;top:583px;color:#595959;white-space:nowrap">
 <div style="font-size:15.8px;font-weight:bold;line-height:18px">Note!</div>
 <div style="font-size:16.2px;line-height:19.65px">Unlike the large bomber sleeves i<br>want the base of the jacket straight<br>,firm and the Hem of the base folded<br>and sewn,&nbsp; also the jacket in the<br>image is cropped to much so the<br>measurements might seem longer</div>
</div>
</div></div>

<!-- CANVAS -->
<svg class="a" style="left:0;top:130px" width="1638" height="40" viewBox="0 130 1638 40">
<rect x="275" y="161" width="1363" height="1" fill="#d5d7da"/>
<rect x="500" y="161" width="1069" height="1" fill="#747775"/>
<path d="M500.50 156.0V161M513.86 156.0V161M527.21 156.0V161M540.57 156.0V161M553.92 151.0V161M567.27 156.0V161M580.63 156.0V161M593.99 156.0V161M607.34 156.0V161M620.70 156.0V161M634.05 156.0V161M647.40 156.0V161M660.76 151.0V161M674.12 156.0V161M687.47 156.0V161M700.83 156.0V161M714.18 156.0V161M727.53 156.0V161M740.89 156.0V161M754.25 156.0V161M767.60 151.0V161M780.95 156.0V161M794.31 156.0V161M807.66 156.0V161M821.02 156.0V161M834.38 156.0V161M847.73 156.0V161M861.09 156.0V161M874.44 151.0V161M887.80 156.0V161M901.15 156.0V161M914.50 156.0V161M927.86 156.0V161M941.22 156.0V161M954.57 156.0V161M967.92 156.0V161M981.28 151.0V161M994.63 156.0V161M1007.99 156.0V161M1021.35 156.0V161M1034.70 156.0V161M1048.06 156.0V161M1061.41 156.0V161M1074.76 156.0V161M1088.12 151.0V161M1101.47 156.0V161M1114.83 156.0V161M1128.18 156.0V161M1141.54 156.0V161M1154.89 156.0V161M1168.25 156.0V161M1181.61 156.0V161M1194.96 151.0V161M1208.32 156.0V161M1221.67 156.0V161M1235.03 156.0V161M1248.38 156.0V161M1261.74 156.0V161M1275.09 156.0V161M1288.45 156.0V161M1301.80 151.0V161M1315.15 156.0V161M1328.51 156.0V161M1341.87 156.0V161M1355.22 156.0V161M1368.58 156.0V161M1381.93 156.0V161M1395.29 156.0V161M1408.64 151.0V161M1421.99 156.0V161M1435.35 156.0V161M1448.70 156.0V161M1462.06 156.0V161M1475.41 156.0V161M1488.77 156.0V161M1502.12 156.0V161M1515.48 151.0V161M1528.84 156.0V161M1542.19 156.0V161M1555.55 156.0V161" stroke="#747775" stroke-width="1" fill="none"/>
<text x="607.34" y="153" font-size="12.6" text-anchor="middle" fill="#444746" font-family="Liberation Sans">1</text>
<text x="714.18" y="153" font-size="12.6" text-anchor="middle" fill="#444746" font-family="Liberation Sans">2</text>
<text x="821.02" y="153" font-size="12.6" text-anchor="middle" fill="#444746" font-family="Liberation Sans">3</text>
<text x="927.86" y="153" font-size="12.6" text-anchor="middle" fill="#444746" font-family="Liberation Sans">4</text>
<text x="1034.70" y="153" font-size="12.6" text-anchor="middle" fill="#444746" font-family="Liberation Sans">5</text>
<text x="1141.54" y="153" font-size="12.6" text-anchor="middle" fill="#444746" font-family="Liberation Sans">6</text>
<text x="1248.38" y="153" font-size="12.6" text-anchor="middle" fill="#444746" font-family="Liberation Sans">7</text>
<text x="1355.22" y="153" font-size="12.6" text-anchor="middle" fill="#444746" font-family="Liberation Sans">8</text>
<text x="1462.06" y="153" font-size="12.6" text-anchor="middle" fill="#444746" font-family="Liberation Sans">9</text>
</svg>
<svg class="a" style="left:240px;top:160px" width="40" height="650" viewBox="240 160 40 650">
<rect x="275" y="161" width="1" height="645" fill="#d5d7da"/>
<rect x="275" y="184" width="1" height="602" fill="#747775"/>
<path d="M270.0 185.30H275M270.0 198.66H275M270.0 212.01H275M270.0 225.37H275M265.0 238.72H275M270.0 252.08H275M270.0 265.43H275M270.0 278.79H275M270.0 292.14H275M270.0 305.50H275M270.0 318.85H275M270.0 332.21H275M265.0 345.56H275M270.0 358.92H275M270.0 372.27H275M270.0 385.62H275M270.0 398.98H275M270.0 412.34H275M270.0 425.69H275M270.0 439.05H275M265.0 452.40H275M270.0 465.75H275M270.0 479.11H275M270.0 492.47H275M270.0 505.82H275M270.0 519.17H275M270.0 532.53H275M270.0 545.88H275M265.0 559.24H275M270.0 572.60H275M270.0 585.95H275M270.0 599.31H275M270.0 612.66H275M270.0 626.02H275M270.0 639.37H275M270.0 652.73H275M265.0 666.08H275M270.0 679.43H275M270.0 692.79H275M270.0 706.14H275M270.0 719.50H275M270.0 732.86H275M270.0 746.21H275M270.0 759.57H275M265.0 772.92H275M270.0 786.28H275" stroke="#747775" stroke-width="1" fill="none"/>
<text x="0" y="0" transform="translate(268 292.14) rotate(-90)" font-size="12.6" text-anchor="middle" fill="#444746" font-family="Liberation Sans">1</text>
<text x="0" y="0" transform="translate(268 398.98) rotate(-90)" font-size="12.6" text-anchor="middle" fill="#444746" font-family="Liberation Sans">2</text>
<text x="0" y="0" transform="translate(268 505.82) rotate(-90)" font-size="12.6" text-anchor="middle" fill="#444746" font-family="Liberation Sans">3</text>
<text x="0" y="0" transform="translate(268 612.66) rotate(-90)" font-size="12.6" text-anchor="middle" fill="#444746" font-family="Liberation Sans">4</text>
<text x="0" y="0" transform="translate(268 719.50) rotate(-90)" font-size="12.6" text-anchor="middle" fill="#444746" font-family="Liberation Sans">5</text>
</svg>
<div class="a" style="left:498.5px;top:183px;width:1069.5px;height:602px;background:#fff;border-top:1px solid #c8c8c8;border-left:1px solid #c8c8c8"></div>
<div class="a" style="left:994px;top:810px;width:60px;height:3px;border-radius:2px;background:#707070"></div>
<div class="a" style="left:276px;top:838px;width:1400px;height:60px;border-radius:12px;background:#edf2fa"></div>
<div class="a" style="left:296px;top:855px;font-size:18.3px;line-height:20px;color:#1f1f1f;white-space:nowrap">Click to add speaker notes</div>
<!-- SLIDE CONTENT -->
<div class="a" style="left:1003px;top:210px;font-size:26.6px;line-height:32px;color:#595959;white-space:nowrap">Back view</div>
<div class="a" style="left:662px;top:250px;width:745px;height:2.5px;background:#000"></div>
<svg class="a" style="left:662px;top:252px" width="745" height="490" viewBox="662 252 745 490">
 <defs>
  <filter id="blur4" x="-20%" y="-20%" width="140%" height="140%"><feGaussianBlur stdDeviation="4"/></filter>
  <filter id="blur10" x="-50%" y="-50%" width="200%" height="200%"><feGaussianBlur stdDeviation="10"/></filter>
  <filter id="blur6" x="-50%" y="-50%" width="200%" height="200%"><feGaussianBlur stdDeviation="6"/></filter>
  <linearGradient id="bodyH" x1="886" y1="0" x2="1183" y2="0" gradientUnits="userSpaceOnUse">
   <stop offset="0" stop-color="#161616"/><stop offset="0.06" stop-color="#222"/><stop offset="0.2" stop-color="#343434"/><stop offset="0.45" stop-color="#444"/><stop offset="0.7" stop-color="#464646"/><stop offset="0.88" stop-color="#3c3c3c"/><stop offset="0.96" stop-color="#2a2a2a"/><stop offset="1" stop-color="#1c1c1c"/>
  </linearGradient>
  <linearGradient id="bodyV" x1="0" y1="376" x2="0" y2="571" gradientUnits="userSpaceOnUse">
   <stop offset="0" stop-color="#000" stop-opacity="0.05"/><stop offset="0.3" stop-color="#000" stop-opacity="0"/><stop offset="0.8" stop-color="#000" stop-opacity="0.1"/><stop offset="0.94" stop-color="#000" stop-opacity="0.35"/><stop offset="1" stop-color="#000" stop-opacity="0.7"/>
  </linearGradient>
  <linearGradient id="hoodH" x1="918" y1="0" x2="1151" y2="0" gradientUnits="userSpaceOnUse">
   <stop offset="0" stop-color="#2c2c2c"/><stop offset="0.3" stop-color="#282828"/><stop offset="0.5" stop-color="#404040"/><stop offset="0.72" stop-color="#424242"/><stop offset="0.9" stop-color="#525252"/><stop offset="1" stop-color="#5a5a5a"/>
  </linearGradient>
  <linearGradient id="hoodV" x1="0" y1="314" x2="0" y2="435" gradientUnits="userSpaceOnUse">
   <stop offset="0" stop-color="#000" stop-opacity="0.1"/><stop offset="0.15" stop-color="#000" stop-opacity="0"/><stop offset="0.6" stop-color="#000" stop-opacity="0.08"/><stop offset="0.85" stop-color="#000" stop-opacity="0.5"/><stop offset="1" stop-color="#000" stop-opacity="0.95"/>
  </linearGradient>
  <linearGradient id="slvL" x1="735" y1="600" x2="880" y2="400" gradientUnits="userSpaceOnUse">
   <stop offset="0" stop-color="#161616"/><stop offset="0.3" stop-color="#262626"/><stop offset="0.6" stop-color="#2e2e2e"/><stop offset="0.85" stop-color="#2c2c2c"/><stop offset="1" stop-color="#303030"/>
  </linearGradient>
  <linearGradient id="slvR" x1="1335" y1="600" x2="1185" y2="400" gradientUnits="userSpaceOnUse">
   <stop offset="0" stop-color="#181818"/><stop offset="0.3" stop-color="#2a2a2a"/><stop offset="0.6" stop-color="#363636"/><stop offset="0.9" stop-color="#404040"/><stop offset="1" stop-color="#3c3c3c"/>
  </linearGradient>
  <linearGradient id="slvIn" x1="0" y1="0" x2="1" y2="0">
   <stop offset="0" stop-color="#000" stop-opacity="0"/><stop offset="1" stop-color="#000" stop-opacity="0.5"/>
  </linearGradient>
  <pattern id="quiltR" width="10" height="10" patternUnits="userSpaceOnUse" patternTransform="rotate(40)">
   <path d="M0 0.5H10M0.5 0V10" stroke="#000" stroke-opacity="0.28" stroke-width="1.2"/>
  </pattern>
  <pattern id="quiltL" width="10" height="10" patternUnits="userSpaceOnUse" patternTransform="rotate(-40)">
   <path d="M0 0.5H10M0.5 0V10" stroke="#000" stroke-opacity="0.15" stroke-width="1"/>
  </pattern>
  <clipPath id="bodyClip"><path d="M919.4 375.6C912 377 904 379 897 381.5C893 382.8 889 384.5 886 387L886 526C887 540 888 552 889 561C891 563 893 564 895 564C940 568 990 571 1035 571C1080 571 1130 568 1176 563C1178.5 562 1180.5 561 1181.4 559C1182.5 545 1183 535 1183 524L1183 390C1182 388 1178 384 1170 381C1163 379 1156 377 1149 376.1Z"/></clipPath>
  <clipPath id="hoodClip"><path d="M919.7 374.3C915.5 369 917 364 920.5 361C926 355 931 347 933.5 340C937 331 944 326 958 322C980 317 1005 315 1032 315C1062 315 1090 317 1103 320C1112 322 1118 325 1122 330C1130 337 1136 345 1140 353C1145 362 1149 368 1151 371C1152 374 1151 376 1150 377C1125 400 1085 432 1037.8 432.7C995 433 955 410 919.7 374.3Z"/></clipPath>
  <clipPath id="slvLClip"><path d="M888.0 386.0C885.8 386.9 878.7 389.2 875.0 391.5C871.3 393.8 869.0 396.5 866.0 399.6C863.0 402.7 860.1 406.6 856.7 410.0C853.3 413.4 848.9 416.7 845.5 420.0C842.1 423.3 839.5 426.7 836.2 430.0C833.0 433.3 829.3 436.7 826.0 440.0C822.7 443.3 819.5 446.7 816.2 450.0C812.9 453.3 809.6 456.7 806.4 460.0C803.2 463.3 800.3 466.7 797.1 470.0C793.9 473.3 790.6 476.7 787.4 480.0C784.1 483.3 780.5 486.7 777.6 490.0C774.8 493.3 772.7 496.7 770.3 500.0C767.9 503.3 765.6 506.7 763.0 510.0C760.4 513.3 757.2 516.7 754.9 520.0C752.6 523.3 750.8 526.7 749.0 530.0C747.2 533.3 745.7 536.7 744.2 540.0C742.7 543.3 741.5 546.7 740.0 550.0C738.5 553.3 736.4 556.7 735.2 560.0C734.0 563.3 733.2 566.7 732.7 570.0C732.2 573.3 731.9 576.7 732.0 580.0C732.1 583.3 732.4 586.8 733.2 590.0C734.0 593.2 736.0 597.9 736.6 599.5L800.6 622.2C803.0 620.3 810.1 614.7 815.0 611.0C819.9 607.3 825.1 603.5 829.9 600.0C834.7 596.5 840.2 593.7 843.6 590.0C847.0 586.3 847.3 582.5 850.0 578.0C852.7 573.5 856.7 568.0 860.0 563.0C863.3 558.0 866.7 553.0 870.0 548.0C873.3 543.0 877.2 536.7 880.0 533.0C882.8 529.3 885.8 527.2 887.0 526.0L889 386Z"/></clipPath>
  <clipPath id="slvRClip"><path d="M1180.0 386.0C1182.4 387.4 1190.4 391.9 1194.4 394.6C1198.4 397.4 1200.9 399.6 1204.2 402.5C1207.5 405.4 1211.2 409.3 1214.0 412.2C1216.8 415.1 1217.5 416.8 1220.8 420.0C1224.1 423.2 1229.6 427.6 1233.9 431.7C1238.2 435.8 1242.5 440.0 1246.6 444.4C1250.7 448.8 1255.0 453.7 1258.4 458.0C1261.8 462.3 1263.4 465.6 1267.1 470.0C1270.8 474.4 1276.3 480.1 1280.3 484.7C1284.3 489.3 1287.6 493.2 1291.3 497.8C1295.0 502.4 1298.6 507.4 1302.3 512.5C1306.0 517.6 1309.6 523.5 1313.3 528.6C1317.0 533.7 1321.5 538.6 1324.4 543.3C1327.3 548.0 1328.9 552.2 1330.7 556.7C1332.5 561.2 1334.2 565.6 1335.1 570.0C1336.0 574.4 1336.2 579.3 1336.0 583.3C1335.8 587.3 1334.9 590.9 1334.2 594.0C1333.5 597.1 1332.4 600.7 1332.0 602.0L1268 623C1265.4 622.0 1257.2 619.9 1252.2 616.9C1247.2 613.9 1242.6 610.1 1237.8 605.3C1233.0 600.5 1228.1 594.7 1223.3 588.0C1218.5 581.3 1213.7 572.4 1208.9 564.9C1204.1 557.4 1198.8 550.0 1194.4 543.2C1190.0 536.5 1184.5 527.5 1182.5 524.4L1180 386Z"/></clipPath>
  <filter id="leather" x="662" y="252" width="745" height="490" filterUnits="userSpaceOnUse">
   <feTurbulence type="fractalNoise" baseFrequency="0.45" numOctaves="3" seed="7"/>
   <feColorMatrix type="matrix" values="0 0 0 0 1  0 0 0 0 1  0 0 0 0 1  1.6 0 0 0 -0.72"/>
  </filter>
  <clipPath id="jkClip"><path d="M888.0 386.0C885.8 386.9 878.7 389.2 875.0 391.5C871.3 393.8 869.0 396.5 866.0 399.6C863.0 402.7 860.1 406.6 856.7 410.0C853.3 413.4 848.9 416.7 845.5 420.0C842.1 423.3 839.5 426.7 836.2 430.0C833.0 433.3 829.3 436.7 826.0 440.0C822.7 443.3 819.5 446.7 816.2 450.0C812.9 453.3 809.6 456.7 806.4 460.0C803.2 463.3 800.3 466.7 797.1 470.0C793.9 473.3 790.6 476.7 787.4 480.0C784.1 483.3 780.5 486.7 777.6 490.0C774.8 493.3 772.7 496.7 770.3 500.0C767.9 503.3 765.6 506.7 763.0 510.0C760.4 513.3 757.2 516.7 754.9 520.0C752.6 523.3 750.8 526.7 749.0 530.0C747.2 533.3 745.7 536.7 744.2 540.0C742.7 543.3 741.5 546.7 740.0 550.0C738.5 553.3 736.4 556.7 735.2 560.0C734.0 563.3 733.2 566.7 732.7 570.0C732.2 573.3 731.9 576.7 732.0 580.0C732.1 583.3 732.4 586.8 733.2 590.0C734.0 593.2 736.0 597.9 736.6 599.5L800.6 622.2C803.0 620.3 810.1 614.7 815.0 611.0C819.9 607.3 825.1 603.5 829.9 600.0C834.7 596.5 840.2 593.7 843.6 590.0C847.0 586.3 847.3 582.5 850.0 578.0C852.7 573.5 856.7 568.0 860.0 563.0C863.3 558.0 866.7 553.0 870.0 548.0C873.3 543.0 877.2 536.7 880.0 533.0C882.8 529.3 885.8 527.2 887.0 526.0L889 386Z"/><path d="M1180.0 386.0C1182.4 387.4 1190.4 391.9 1194.4 394.6C1198.4 397.4 1200.9 399.6 1204.2 402.5C1207.5 405.4 1211.2 409.3 1214.0 412.2C1216.8 415.1 1217.5 416.8 1220.8 420.0C1224.1 423.2 1229.6 427.6 1233.9 431.7C1238.2 435.8 1242.5 440.0 1246.6 444.4C1250.7 448.8 1255.0 453.7 1258.4 458.0C1261.8 462.3 1263.4 465.6 1267.1 470.0C1270.8 474.4 1276.3 480.1 1280.3 484.7C1284.3 489.3 1287.6 493.2 1291.3 497.8C1295.0 502.4 1298.6 507.4 1302.3 512.5C1306.0 517.6 1309.6 523.5 1313.3 528.6C1317.0 533.7 1321.5 538.6 1324.4 543.3C1327.3 548.0 1328.9 552.2 1330.7 556.7C1332.5 561.2 1334.2 565.6 1335.1 570.0C1336.0 574.4 1336.2 579.3 1336.0 583.3C1335.8 587.3 1334.9 590.9 1334.2 594.0C1333.5 597.1 1332.4 600.7 1332.0 602.0L1268 623C1265.4 622.0 1257.2 619.9 1252.2 616.9C1247.2 613.9 1242.6 610.1 1237.8 605.3C1233.0 600.5 1228.1 594.7 1223.3 588.0C1218.5 581.3 1213.7 572.4 1208.9 564.9C1204.1 557.4 1198.8 550.0 1194.4 543.2C1190.0 536.5 1184.5 527.5 1182.5 524.4L1180 386Z"/><path d="M919.4 375.6C912 377 904 379 897 381.5C893 382.8 889 384.5 886 387L886 526C887 540 888 552 889 561C891 563 893 564 895 564C940 568 990 571 1035 571C1080 571 1130 568 1176 563C1178.5 562 1180.5 561 1181.4 559C1182.5 545 1183 535 1183 524L1183 390C1182 388 1178 384 1170 381C1163 379 1156 377 1149 376.1Z"/><path d="M919.7 374.3C915.5 369 917 364 920.5 361C926 355 931 347 933.5 340C937 331 944 326 958 322C980 317 1005 315 1032 315C1062 315 1090 317 1103 320C1112 322 1118 325 1122 330C1130 337 1136 345 1140 353C1145 362 1149 368 1151 371C1152 374 1151 376 1150 377C1125 400 1085 432 1037.8 432.7C995 433 955 410 919.7 374.3Z"/></clipPath>
 </defs>
 <rect x="662" y="252" width="745" height="490" fill="#dadada"/>
 <!-- left sleeve -->
 <g clip-path="url(#slvLClip)">
  <rect x="720" y="380" width="175" height="250" fill="url(#slvL)"/>
  <ellipse cx="815" cy="505" rx="20" ry="70" transform="rotate(40 815 505)" fill="#3a3a3a" opacity="0.45" filter="url(#blur10)"/>
  <rect x="720" y="380" width="175" height="250" fill="url(#quiltL)"/>
  <path d="M740 600C770 610 790 620 805 625L850 590L760 560Z" fill="#000" opacity="0.3" filter="url(#blur6)"/>
 </g>
 <!-- left cuff -->
 <path d="M736.6 599.5C735.2 602.1 730.7 609.9 728.0 615.0C725.3 620.1 723.5 625.1 720.5 630.0C717.5 634.9 711.6 642.1 709.8 644.5C713 647.5 717 648 721.5 648C726.0 649.9 739.4 656.3 748.8 659.2C758.2 662.1 773.2 664.5 778.1 665.5C778.8 663.8 780.4 658.8 782.0 655.0C783.6 651.2 784.8 648.1 787.9 642.6C791.0 637.1 798.5 625.6 800.6 622.2C780 615 755 607 736.6 599.5Z" fill="#1a1a1a" stroke="#1a1a1a" stroke-width="1.6"/>
 <path d="M736.6 599.5C745 608 751 617 751.8 625C752.5 636 745 645 730 647.5C725 648 721.5 648 721.5 648C717 648 713 647.5 709.8 644.5C715 636 720.5 630 728 615Z" fill="#1c1c1c"/>
 <path d="M736.6 599.5C745 608 751 617 751.8 625C752.5 636 745 645 730 647.5" fill="none" stroke="#080808" stroke-width="1.2"/>
 <circle cx="741" cy="630.4" r="4" fill="#6e6e6e"/><circle cx="740.3" cy="629.6" r="2.2" fill="#a8a8a8"/>
 <!-- right sleeve -->
 <g clip-path="url(#slvRClip)">
  <rect x="1175" y="380" width="170" height="250" fill="url(#slvR)"/>
  <ellipse cx="1275" cy="520" rx="22" ry="75" transform="rotate(-40 1275 520)" fill="#444" opacity="0.4" filter="url(#blur10)"/>
  <rect x="1175" y="380" width="170" height="250" fill="url(#quiltR)"/>
  <path d="M1330 600C1300 612 1280 620 1265 625L1215 590L1310 560Z" fill="#000" opacity="0.3" filter="url(#blur6)"/>
 </g>
 <!-- right cuff -->
 <path d="M1332 602C1333.3 605.0 1337.0 614.5 1340.0 620.0C1343.0 625.5 1346.8 630.5 1350.0 635.0C1353.2 639.5 1357.5 645.0 1359.0 647.0C1355 649.5 1350 650 1346 650C1341.7 651.7 1329.0 657.2 1320.0 660.0C1311.0 662.8 1296.7 665.8 1292.0 667.0C1290.8 665.0 1287.0 659.5 1285.0 655.0C1283.0 650.5 1282.8 645.3 1280.0 640.0C1277.2 634.7 1270.0 625.8 1268.0 623.0C1290 616 1312 609 1332 602Z" fill="#1a1a1a" stroke="#1a1a1a" stroke-width="1.6"/>
 <path d="M1332 602C1340 620 1350 635 1359 647C1355 649.5 1350 650 1340 648.5C1328 646 1319 638 1317 625C1316 617 1320 608 1326 604Z" fill="#1e1e1e"/>
 <path d="M1359 647C1355 649.5 1350 650 1340 648.5C1328 646 1319 638 1317 625C1316 617 1320 608 1326 604" fill="none" stroke="#080808" stroke-width="1.2"/>
 <circle cx="1328" cy="632" r="4.2" fill="#707070"/><circle cx="1327.3" cy="631.2" r="2.3" fill="#aaa"/>
 <!-- body -->
 <g clip-path="url(#bodyClip)">
  <rect x="880" y="370" width="310" height="210" fill="url(#bodyH)"/>
  <ellipse cx="960" cy="455" rx="40" ry="45" fill="#444" opacity="0.35" filter="url(#blur10)"/>
  <ellipse cx="1115" cy="450" rx="40" ry="45" fill="#444" opacity="0.35" filter="url(#blur10)"/>
  <rect x="880" y="370" width="310" height="210" fill="url(#bodyV)"/>
  <path d="M919 377C950 410 990 432 1037 433C1085 432 1125 405 1151 376L1151 388C1120 422 1085 440 1037 441C990 440 950 418 919 388Z" fill="#000" opacity="0.6" filter="url(#blur4)"/>
  <path d="M885 560C930 566 985 570 1035 570C1085 570 1140 566 1185 560" fill="none" stroke="#0a0a0a" stroke-width="3" opacity="0.7"/>
 </g>
 <path d="M887.5 390V560M1182.5 390V558" stroke="#101010" stroke-width="1.2" opacity="0.5"/>
 <!-- hood -->
 <g clip-path="url(#hoodClip)">
  <rect x="910" y="310" width="250" height="130" fill="url(#hoodH)"/>
  <ellipse cx="1035" cy="365" rx="30" ry="35" fill="#4a4a4a" opacity="0.5" filter="url(#blur10)"/>
  <rect x="910" y="310" width="250" height="130" fill="url(#hoodV)"/>
  <path d="M934 343C938 334 946 329.5 959 325.5C981 320.5 1006 318.5 1032 318.5C1062 318.5 1089 320 1102 323C1110 325 1116 328 1121 333.5" fill="none" stroke="#181818" stroke-width="8"/>
  <path d="M936 346C940 338 948 333.5 961 329.5C983 324.5 1007 322.5 1032 322.5C1062 322.5 1089 324 1101 327C1109 329 1115 332 1120 337.5" fill="none" stroke="#444" stroke-width="0.9" opacity="0.7"/>
 </g>
 <path d="M1005 319V428M1061 319V427" stroke="#0e0e0e" stroke-width="1.3" opacity="0.85"/>
 <g clip-path="url(#jkClip)" opacity="0.1"><rect x="662" y="252" width="745" height="490" fill="#fff" filter="url(#leather)"/></g>
</svg>
<div class="a" style="left:1168px;top:270.5px;color:#595959;white-space:nowrap">
 <div style="font-size:20px;font-weight:bold;line-height:25px">Note!</div>
 <div style="font-size:17.7px;line-height:20.9px">Also my waist size&nbsp; 32/33<br>And do not add a fold and<br>sew at the end of the hood<br>as in the image</div>
</div>
<div class="a" style="left:910.5px;top:583px;color:#595959;white-space:nowrap">
 <div style="font-size:15.8px;font-weight:bold;line-height:18px">Note!</div>
 <div style="font-size:16.2px;line-height:19.65px">Unlike the large bomber sleeves i<br>want the base of the jacket straight<br>,firm and the Hem of the base folded<br>and sewn,&nbsp; also the jacket in the<br>image is cropped to much so the<br>measurements might seem longer</div>
</div>

</body></html>
